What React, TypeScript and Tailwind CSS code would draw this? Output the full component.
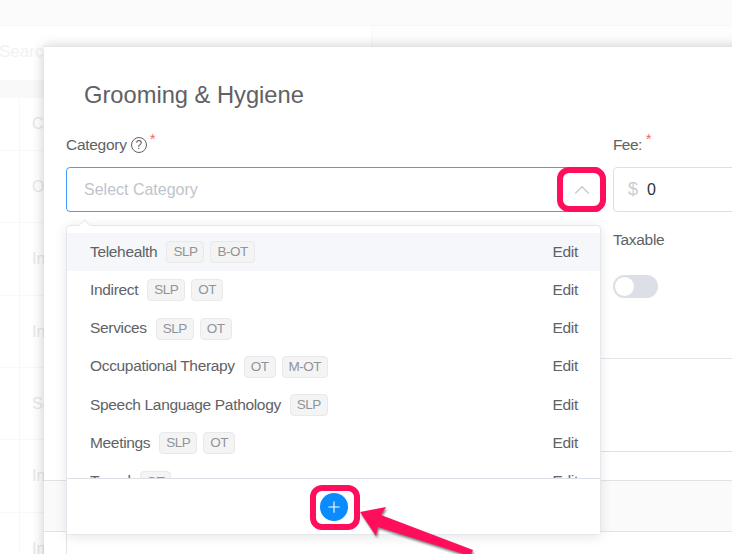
import React from 'react';
import { ChevronUp, Plus } from 'lucide-react';

const backRows = [
  { text: 'Ca', height: 'h-[53px]' },
  { text: 'O', height: 'h-[72px]' },
  { text: 'In', height: 'h-[73px]' },
  { text: 'In', height: 'h-[72px]' },
  { text: 'Se', height: 'h-[72px]' },
  { text: 'In', height: 'h-[73px]' },
  { text: 'In', height: 'h-[72px]' },
];

const categories = [
  { name: 'Telehealth', tags: ['SLP', 'B-OT'], active: true },
  { name: 'Indirect', tags: ['SLP', 'OT'] },
  { name: 'Services', tags: ['SLP', 'OT'] },
  { name: 'Occupational Therapy', tags: ['OT', 'M-OT'] },
  { name: 'Speech Language Pathology', tags: ['SLP'] },
  { name: 'Meetings', tags: ['SLP', 'OT'] },
  { name: 'Travel', tags: ['OT'] },
];

const Asterisk = () => <span className="text-[#f56c6c] text-[15px] leading-none relative -top-[6px]">*</span>;

const Dropdown = () => (
  <div className="absolute left-0 top-[89px] w-[535px] h-[310px] bg-white border border-[#e4e7ed] rounded-[4px] shadow-[0_2px_12px_rgba(0,0,0,0.1)] flex flex-col">
    <div className="absolute -top-[5px] left-[13px] w-[9px] h-[9px] rotate-45 bg-white border-l border-t border-[#e4e7ed]" />
    <div className="h-[252px] pt-[7px] overflow-hidden shrink-0">
      {categories.map((cat) => (
        <div
          key={cat.name}
          className={`h-[38.25px] pl-[23px] pr-[22px] flex items-center justify-between ${cat.active ? 'bg-[#f5f7fa]' : ''}`}
        >
          <div className="flex items-center">
            <span className="pb-[2px] text-[15.5px] tracking-[-0.33px] text-[#606266] mr-[9px]">{cat.name}</span>
            <div className="flex gap-[6px]">
              {cat.tags.map((tag) => (
                <span
                  key={tag}
                  className="h-[22px] px-[6px] flex items-center rounded-[4px] bg-[#f4f4f5] border border-[#e9e9eb] text-[13.5px] tracking-[-0.5px] text-[#909399]"
                >
                  {tag}
                </span>
              ))}
            </div>
          </div>
          <span className="pb-[2px] text-[15.5px] tracking-[-0.28px] text-[#606266]">Edit</span>
        </div>
      ))}
    </div>
    <div className="flex-1 border-t border-[#dcdfe6] flex items-center justify-center bg-white">
      <div className="w-[28px] h-[28px] rounded-full bg-[#0a8cff] flex items-center justify-center">
        <Plus size={18} strokeWidth={1.5} className="text-white" />
      </div>
    </div>
  </div>
);

const App = () => {
  return (
    <div className="relative w-[732px] h-[554px] overflow-hidden bg-[#fdfdfd] font-['Liberation_Sans',Arial,sans-serif]">
      {/* page behind the dialog, almost washed out */}
      <div className="h-[26px] bg-[#fbfbfb] border-b border-[#f7f7f7]" />
      <div className="w-[372px] bg-white border-r border-[#f8f8f8]">
        <div className="h-[54px] pt-[16px] text-[17px] leading-[20px] text-[#f2f2f2] -ml-[1px]">Search</div>
        <div className="h-[18px] bg-[#f9f9f9]" />
        {backRows.map((row, i) => (
          <div key={i} className={`${row.height} border-b border-[#f8f8f8] flex`}>
            <div className="w-[20px] border-r border-[#f8f8f8]" />
            <div className="pl-[12px] flex items-center text-[16px] text-[#e8e8e8]">{row.text}</div>
          </div>
        ))}
      </div>

      {/* dialog */}
      <div className="absolute left-[44px] top-[47px] w-[760px] h-[560px] bg-white shadow-[0_0_12px_rgba(0,0,0,0.22)] flex flex-col">
        <h2 className="pl-[40px] pt-[34px] text-[23.7px] leading-[28px] text-[#5f6165] font-normal">Grooming &amp; Hygiene</h2>
        <div className="pl-[22px] pt-[27px] flex gap-[12px]">
          <div className="relative w-[535px] shrink-0">
            <div className="h-[18px] flex items-center text-[15.5px] tracking-[-0.28px] text-[#606266]">
              Category
              <span className="ml-[4px] w-[16px] h-[16px] rounded-full border border-[#606266] flex items-center justify-center text-[12px]">?</span>
              <span className="ml-[3px]"><Asterisk /></span>
            </div>
            <div className="mt-[13px] h-[45px] border border-[#409eff] rounded-[4px] flex items-center justify-between pl-[17px] pr-[5px]">
              <span className="text-[16px] text-[#c0c4cc]">Select Category</span>
              <ChevronUp size={26} strokeWidth={1} className="text-[#c0c4cc]" />
            </div>
            <Dropdown />
          </div>
          <div className="flex-1">
            <div className="h-[18px] flex items-center text-[15.5px] tracking-[-0.6px] text-[#606266]">
              Fee:
              <span className="ml-[4px]"><Asterisk /></span>
            </div>
            <div className="mt-[13px] h-[45px] border border-[#dcdfe6] rounded-[4px] flex items-center pl-[14px]">
              <span className="text-[18px] text-[#c8ccd4] mr-[9px]">$</span>
              <span className="text-[16px] text-[#303133]">0</span>
            </div>
            <div className="mt-[19px] h-[18px] flex items-center text-[15.5px] tracking-[-0.28px] text-[#606266]">Taxable</div>
            <div className="mt-[26px] w-[45px] h-[23px] rounded-full bg-[#dcdfe6] p-[2px]">
              <div className="w-[19px] h-[19px] rounded-full bg-white" />
            </div>
          </div>
        </div>
        <div className="mt-[60px] h-[93px] border-t border-[#e4e4ec] ml-[22px]" />
        <div className="h-[29px] border-t border-[#e0e0e0] ml-[22px]" />
        <div className="h-[52px] bg-[#fafafa] border-y border-[#e2e2e2]" />
        <div className="flex-1 ml-[22px] border-l border-[#e4e4e4]" />
      </div>

      {/* annotations drawn over the screenshot */}
      <div className="absolute left-[557px] top-[167px] w-[49px] h-[45px] border-[6px] border-[#ff0f5b] rounded-[12px]" />
      <div className="absolute left-[310px] top-[485px] w-[50px] h-[45px] border-[6px] border-[#ff0f5b] rounded-[12px]" />
      <svg className="absolute left-[350px] top-[500px] drop-shadow-[1px_2px_1px_rgba(0,0,0,0.5)]" width="130" height="54" viewBox="0 0 130 54">
        <polygon points="10,12 36,7 31,15 123,50 120,56 28,27 26,36" fill="#ff0f5b" />
      </svg>
    </div>
  );
};

export default App;
